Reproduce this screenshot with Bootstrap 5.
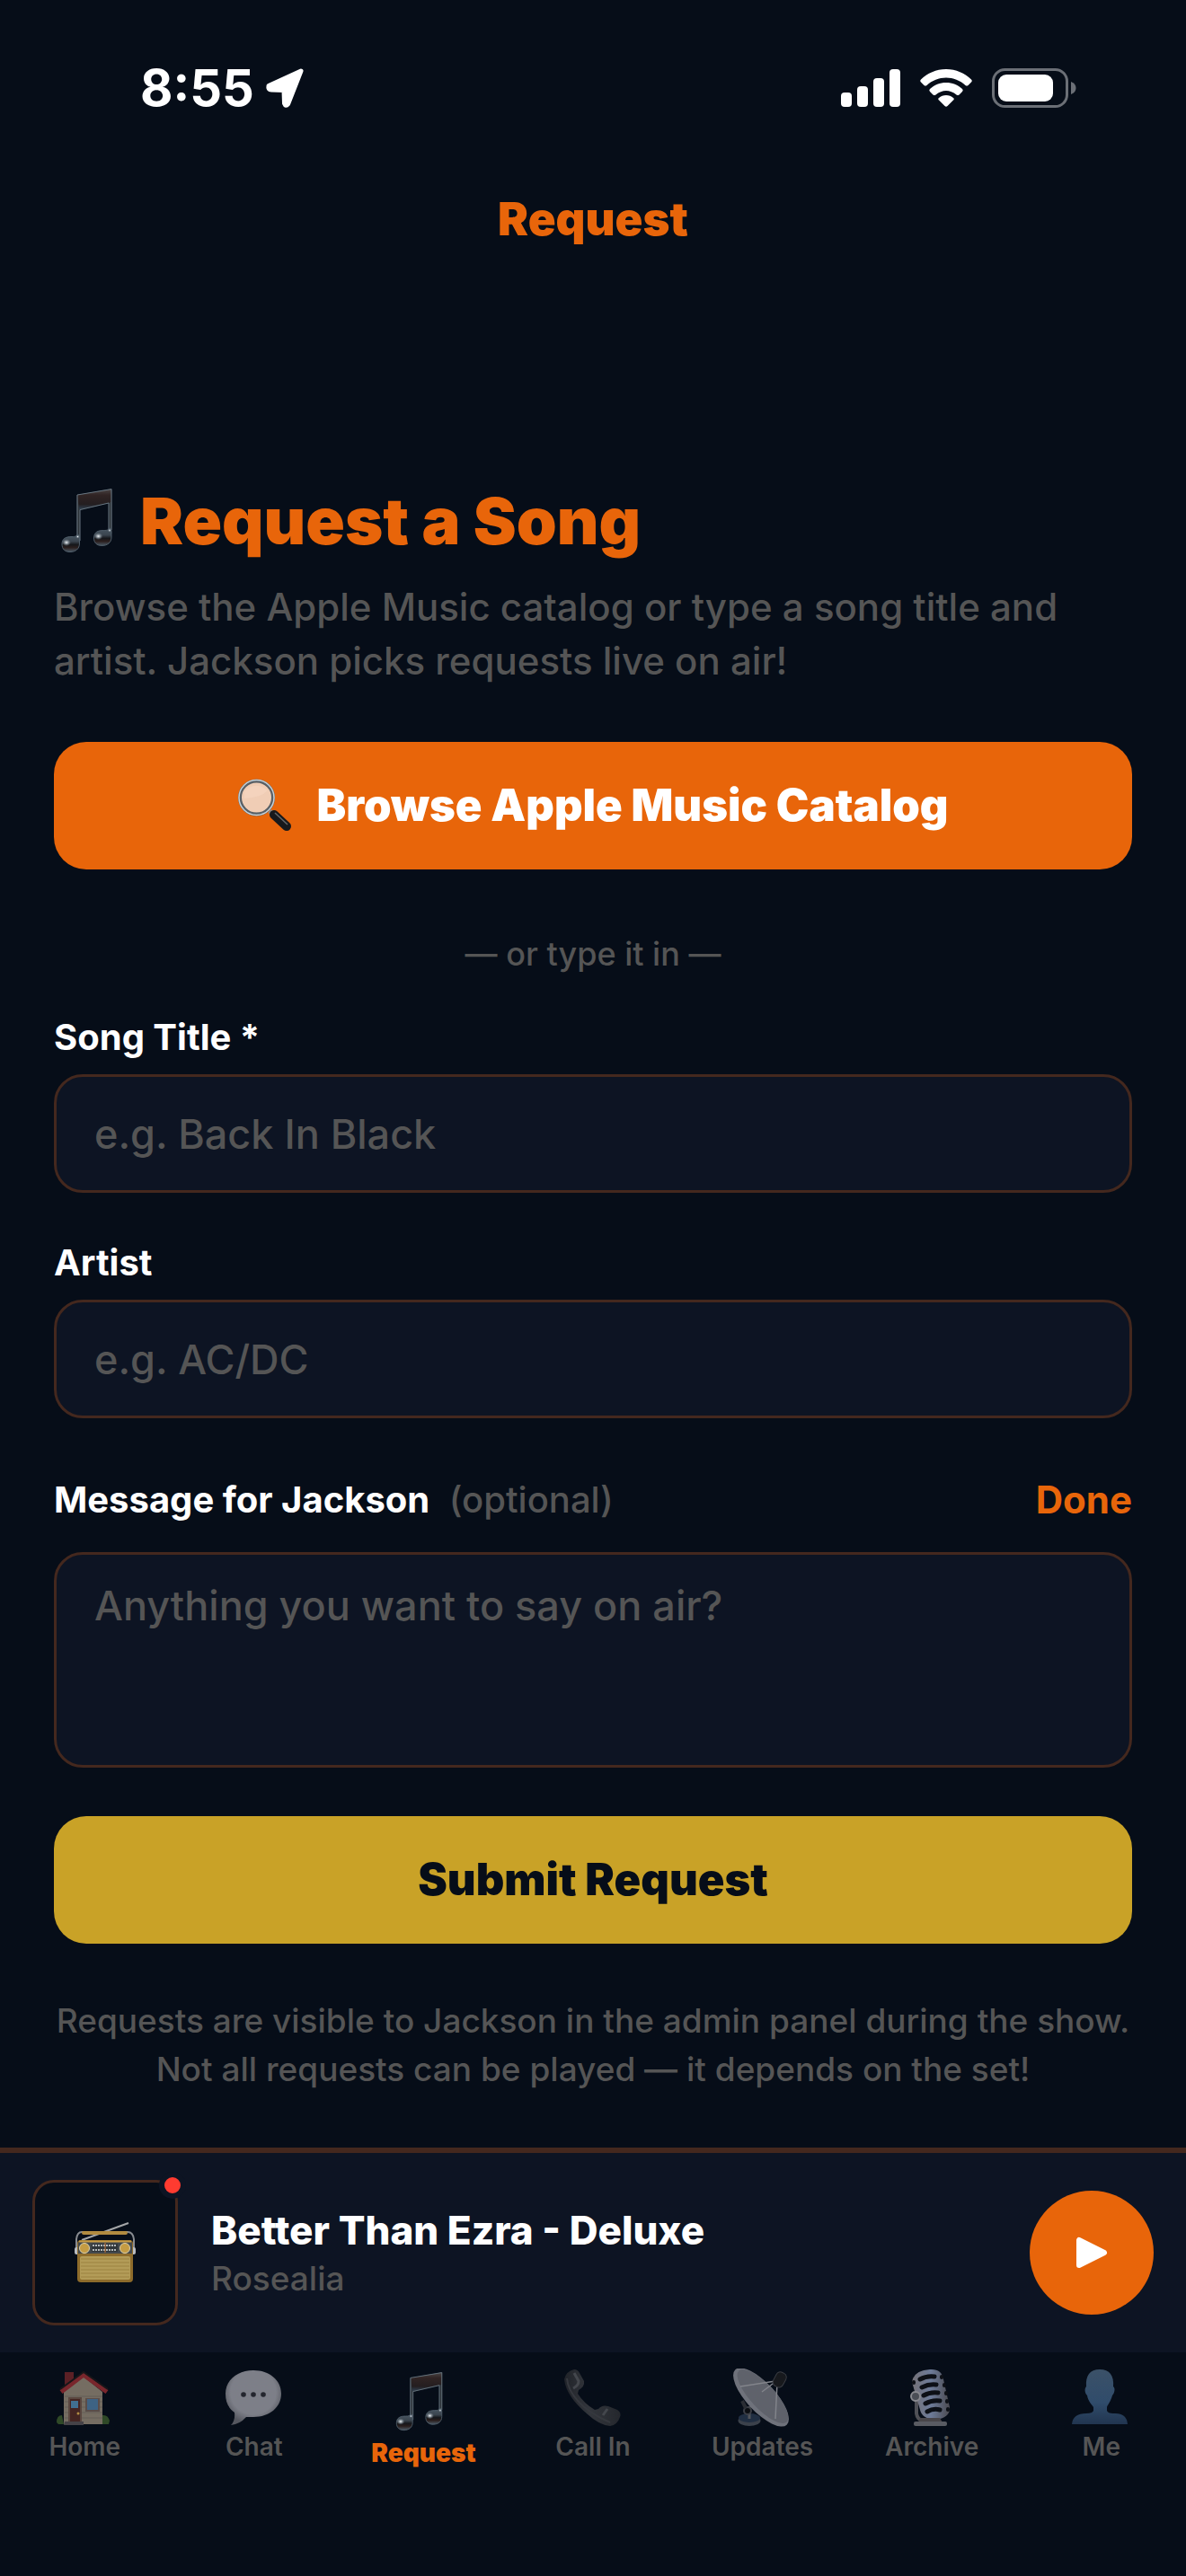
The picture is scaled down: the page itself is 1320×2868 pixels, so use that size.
<!DOCTYPE html>
<html lang="en">
<head>
<meta charset="utf-8">
<meta name="viewport" content="width=device-width, initial-scale=1">
<title>Request a Song</title>
<link rel="stylesheet" href="https://cdn.jsdelivr.net/npm/bootstrap@5.3.0/dist/css/bootstrap.min.css">
<style>
  :root { --night:#060d18; --panel:#0d1423; --edge:#44281e; --orange:#e8650a; --gold:#c9a227; --muted:#555; }
  body { background:var(--night); color:#fff; font-family:Inter,"Liberation Sans",sans-serif; font-size:36px; line-height:54px; }
  svg { display:block; flex:none; }
  .status-bar { padding:66px 122px 0 156px; height:130px; }
  .status-left { gap:12px; }
  .status-right { gap:22px; }
  .clock { font-size:56px; line-height:64px; font-weight:700; }
  .screen-title { padding-top:84px; font-size:51px; line-height:60px; font-weight:900; color:var(--orange); }
  .page-main { padding:264px 60px 60px; }
  .page-heading { font-size:72px; line-height:84px; font-weight:900; color:var(--orange); gap:30px; padding-left:8px; margin-bottom:24px; }
  .intro { font-size:42px; line-height:60px; color:var(--muted); font-weight:500; margin-bottom:60px; }
  .big-btn { height:142px; border:0; border-radius:36px; font-size:49px; line-height:60px; font-weight:900; --bs-btn-color:#fff; }
  .btn-browse, .btn-browse:hover { background:var(--orange); color:#fff; gap:28px; }
  .btn-submit, .btn-submit:hover { background:var(--gold); color:var(--night); }
  .divider-text { margin:72px 0 48px; line-height:44px; color:var(--muted); font-weight:500; }
  .field-label { font-size:40px; line-height:46px; font-weight:700; margin-bottom:18px; }
  .field, .field:focus { background:var(--panel); border:3px solid var(--edge); border-radius:32px; color:#fff; font-size:45px; line-height:54px; font-weight:500; padding:30px 42px; box-shadow:none; }
  .field::placeholder { color:var(--muted); opacity:1; }
  input.field { height:132px; }
  textarea.field { height:240px; resize:none; }
  .field-group { margin-bottom:55px; }
  .message-row { height:56px; margin:63px 0 30px; }
  .message-row .field-label { margin:0; }
  .optional { font-weight:500; color:var(--muted); margin-left:12px; }
  .btn-done, .btn-done:hover { color:var(--orange); font-size:42px; line-height:56px; font-weight:700; border:0; padding:0; }
  .btn-submit { margin-top:54px; }
  .note { color:var(--muted); font-size:37px; font-weight:500; margin:59px -6px 0; }
  .player { background:var(--panel); border-top:6px solid var(--edge); padding:30px 36px; gap:37px; }
  .cover { width:162px; height:162px; background:var(--night); border:3px solid var(--edge); border-radius:24px; }
  .live-dot { top:-12px; right:-12px; width:30px; height:30px; border-radius:50%; background:#ff3b30; border:6px solid var(--panel); }
  .track-info { padding-top:4px; }
  .track { font-size:44px; line-height:54px; font-weight:800; }
  .track-artist { font-size:37px; line-height:54px; color:var(--muted); font-weight:500; }
  .play-btn, .play-btn:hover { width:138px; height:138px; border:0; border-radius:50%; background:var(--orange); }
  .tabs { padding:18px 0 121px; }
  .tab-link { flex:1 1 0; min-width:0; font-size:28px; line-height:32px; font-weight:600; color:var(--muted); text-decoration:none; gap:5px; }
  .tab-link.active { color:var(--orange); font-weight:900; }
</style>
</head>
<body class="d-flex flex-column min-vh-100">
<svg width="0" height="0" class="position-absolute" aria-hidden="true">
  <defs>
    <linearGradient id="beam" x1="0" y1="0" x2="0" y2="1"><stop offset="0" stop-color="#4a4444"/><stop offset=".3" stop-color="#302424"/><stop offset=".75" stop-color="#241e20"/><stop offset="1" stop-color="#2f4152"/></linearGradient>
    <linearGradient id="ball" x1="0" y1="0" x2="0" y2="1"><stop offset="0" stop-color="#4a5864"/><stop offset=".4" stop-color="#3a444e"/><stop offset=".58" stop-color="#15171b"/><stop offset=".75" stop-color="#2a1e1d"/><stop offset="1" stop-color="#4a5966"/></linearGradient>
    <radialGradient id="shine"><stop offset="0" stop-color="#f4f6f8"/><stop offset=".4" stop-color="#a3adb5" stop-opacity=".8"/><stop offset="1" stop-color="#6c7780" stop-opacity="0"/></radialGradient>
    <symbol id="notes" viewBox="0 0 58 72">
      <path d="M17.500 7 56.500 0V50H53V16L21 24V58H17.500Z" fill="#2c3238"/>
      <path d="M18 7 56 .500V15L20 23Z" fill="url(#beam)"/>
      <path d="M18 54V7L56 .600V46M21 58V23.500L53 16V48" fill="none" stroke="#687681" stroke-width="1"/>
      <path d="M18 51Q20.500 51 20.500 56V61C20.500 67 16 70.500 10 70.500 4 70.500 1 67 1 62 1 55 6 53.500 12 53.500 16 53.500 17 53 18 51Z" fill="url(#ball)" stroke="#4f5d69"/>
      <path d="M53.500 44Q56 44 56 49V54C56 60 51.500 63.500 45.500 63.500 39.500 63.500 36.500 60 36.500 55 36.500 48 41.500 46.500 47.500 46.500 51.500 46.500 52.500 46 53.500 44Z" fill="url(#ball)" stroke="#4f5d69"/>
      <ellipse cx="6" cy="60" rx="5" ry="4" fill="url(#shine)"/><ellipse cx="41.500" cy="53" rx="5" ry="4" fill="url(#shine)"/>
      <circle cx="18.500" cy="53.500" r="2" fill="url(#shine)"/><circle cx="54" cy="46.500" r="2" fill="url(#shine)"/>
    </symbol>
  </defs>
</svg>

<header>
  <div class="status-bar d-flex align-items-center justify-content-between">
    <div class="status-left d-flex align-items-center">
      <span class="clock">8:55</span>
      <svg width="46" height="46" viewBox="0 0 46 46" aria-hidden="true"><path d="M40 4 4 20.500Q3 25 7 25L21 25.500 21.500 40Q23 44 25.500 41Z" fill="#fff" stroke="#fff" stroke-width="5" stroke-linejoin="round"/></svg>
    </div>
    <div class="status-right d-flex align-items-center" aria-hidden="true">
      <svg width="66" height="42" viewBox="0 0 66 42" fill="#fff"><rect y="26" width="12" height="16" rx="4"/><rect x="18" y="19" width="12" height="23" rx="4"/><rect x="36" y="10" width="12" height="32" rx="4"/><rect x="54" width="12" height="42" rx="4"/></svg>
      <svg width="58" height="42" viewBox="0 0 58 42" fill="#fff"><path d="M29 0C40 0 50 4.500 57 11.500Q58.500 13 57 14.500L53.500 18Q52 19 50.500 18C44.500 12.500 37 9.500 29 9.500S13.500 12.500 7.500 18Q6 19 4.500 18L1 14.500Q-.500 13 1 11.500C8 4.500 18 0 29 0Z"/><path d="M29 15C36 15 42 17.500 47 22Q48.500 23.500 47 25L43.500 28.500Q42 29.500 40.500 28.500C37 25.500 33 24 29 24S21 25.500 17.500 28.500Q16 29.500 14.500 28.500L11 25Q9.500 23.500 11 22C16 17.500 22 15 29 15Z"/><path d="M29 29C32 29 35 30 37 32Q38.500 33 37 34.500L30.500 41Q29 42.500 27.500 41L21 34.500Q19.500 33 21 32C23 30 26 29 29 29Z"/></svg>
      <svg width="94" height="44" viewBox="0 0 94 44"><rect x="1.500" y="1.500" width="82" height="41" rx="13" fill="none" stroke="#6b6f76" stroke-width="3"/><rect x="7" y="7" width="61" height="30" rx="9" fill="#fff"/><path d="M88 15Q93.500 17 93.500 22T88 29Z" fill="#6b6f76"/></svg>
    </div>
  </div>
  <div class="screen-title text-center">Request</div>
</header>

<main class="page-main flex-grow-1">
  <h1 class="page-heading d-flex align-items-center mt-0">
    <svg width="58" height="72" aria-hidden="true"><use href="#notes"/></svg>
    <span>Request a Song</span>
  </h1>
  <p class="intro">Browse the Apple Music catalog or type a song title and artist. Jackson picks requests live on air!</p>
  <form>
    <button type="button" class="btn big-btn btn-browse w-100 d-flex align-items-center justify-content-center">
      <svg width="60" height="60" viewBox="0 0 60 60" aria-hidden="true">
        <path d="m36 36 5 4" stroke="#8b8f92" stroke-width="5"/><path d="M41 40 55 53" stroke="#17191c" stroke-width="10" stroke-linecap="round"/><path d="m42 38 14 13" stroke="#64686b" stroke-width="1.500"/>
        <circle cx="21.500" cy="21" r="18.500" fill="#f0cdb5" stroke="#596066" stroke-width="4"/><circle cx="21.500" cy="21" r="19.500" fill="none" stroke="#c6d0d6" stroke-width="1.500"/><path d="M8 14Q20 2 34 13 27 21 8 22Z" fill="#f8dac5" opacity=".5"/>
      </svg>
      <span>Browse Apple Music Catalog</span>
    </button>
    <p class="divider-text text-center">— or type it in —</p>
    <div class="field-group">
      <label class="field-label d-block" for="song">Song Title *</label>
      <input class="form-control field" id="song" type="text" placeholder="e.g. Back In Black">
    </div>
    <div class="field-group">
      <label class="field-label d-block" for="artist">Artist</label>
      <input class="form-control field" id="artist" type="text" placeholder="e.g. AC/DC">
    </div>
    <div class="message-row d-flex align-items-center justify-content-between">
      <label class="field-label" for="message">Message for Jackson <span class="optional">(optional)</span></label>
      <button type="button" class="btn btn-done">Done</button>
    </div>
    <textarea class="form-control field" id="message" placeholder="Anything you want to say on air?"></textarea>
    <button type="submit" class="btn big-btn btn-submit d-block w-100">Submit Request</button>
  </form>
  <p class="note text-center">Requests are visible to Jackson in the admin panel during the show.<br>Not all requests can be played — it depends on the set!</p>
</main>

<footer>
  <section class="player d-flex align-items-center" aria-label="Now playing">
    <div class="cover position-relative d-flex align-items-center justify-content-center flex-shrink-0">
      <svg width="70" height="68" viewBox="-1 0 70 68" aria-hidden="true">
        <path d="M8 20 60 1" stroke="#a4a6a8" stroke-width="2"/><path d="M2 34V19Q3 11 8 11H59Q65 11 66 19V34" fill="none" stroke="#888b90" stroke-width="2"/><rect x="8" y="10" width="51" height="4" rx="2" fill="#b28b40"/>
        <rect y="28" width="5" height="8" rx="2" fill="#b9bcc0"/><rect x="63" y="28" width="5" height="8" rx="2" fill="#b9bcc0"/>
        <rect x="3" y="20" width="62" height="47" rx="4" fill="#8d6b2b"/><path d="M4 24Q4 21 8 21H60Q64 21 64 24V35H4Z" fill="#42484c"/><path d="M5 21.500H63" stroke="#c89c45" stroke-width="2"/>
        <circle cx="11" cy="29" r="5.500" fill="#c59c43" stroke="#ddd1ac"/><circle cx="56" cy="29" r="5.500" fill="#c59c43" stroke="#ddd1ac"/>
        <rect x="19" y="24" width="29" height="9" fill="#30363a"/><path d="M20 26H47M20 31H47" stroke="#b6babb" stroke-width="2" stroke-dasharray="2 1"/><path d="M34 23V34" stroke="#c8783b"/>
        <rect x="6" y="38" width="56" height="26" rx="2" fill="#b39c58"/><path d="M7 41H61M7 45H61M7 49H61M7 53H61M7 57H61M7 61H61" stroke="#9c8240" stroke-width="1"/>
      </svg>
      <span class="live-dot position-absolute"></span>
    </div>
    <div class="track-info flex-grow-1">
      <div class="track">Better Than Ezra - Deluxe</div>
      <div class="track-artist">Rosealia</div>
    </div>
    <button type="button" class="btn play-btn p-0 d-flex align-items-center justify-content-center" aria-label="Play">
      <svg width="36" height="36" viewBox="0 0 36 36"><path d="M4 4V32L32 18Z" fill="#fff" stroke="#fff" stroke-width="6" stroke-linejoin="round"/></svg>
    </button>
  </section>

  <nav class="tabs d-flex align-items-start" aria-label="Main">
    <a class="tab-link d-flex flex-column align-items-center" href="#home">
      <svg width="66" height="66" viewBox="0 0 66 66" aria-hidden="true"><path d="M11 4H21V22L11 26Z" fill="#5b2025"/><path d="M10 26 32 9 53 26V62H10Z" fill="#756d62"/><path d="M11 31H53M11 37H53M11 43H53M11 49H53M11 55H53" stroke="#655f57"/><path d="M7 26 32 7 58 26" fill="none" stroke="#79262c" stroke-width="5"/><path d="M6 23 32 4 59 23" fill="none" stroke="#181619" stroke-width="2"/><rect x="15" y="32" width="15" height="29" fill="#5a4740"/><rect x="17" y="34" width="11" height="26" fill="#442522"/><rect x="18" y="36" width="8" height="8" fill="#417091"/><circle cx="26" cy="50" r="1.500" fill="#b28c42"/><rect x="34" y="33" width="16" height="15" fill="#5a4d49"/><rect x="36" y="34" width="12" height="12" fill="#3e6384"/><path d="M2 60Q2 52 8 52L10 62H4ZM53 62V52Q59 51 61 58L60 62Z" fill="#2f4927"/><path d="M11 59H32V63H10Z" fill="#454247"/></svg>
      <span>Home</span>
    </a>
    <a class="tab-link d-flex flex-column align-items-center" href="#chat">
      <svg width="66" height="66" viewBox="0 0 66 66" aria-hidden="true"><defs><radialGradient id="bub" cx=".5" cy=".4" r=".58"><stop offset=".7" stop-color="#7d7f88"/><stop offset="1" stop-color="#55575f"/></radialGradient></defs><path d="M32 2C50 2 63 13 63 28S50 54 32 54Q28 54 24 54 17 62 7 63 12 58 11 49C4 44 1 37 1 28 1 13 14 2 32 2Z" fill="url(#bub)"/><g fill="#24262e"><circle cx="21" cy="29" r="2.800"/><circle cx="32" cy="29" r="2.800"/><circle cx="43" cy="29" r="2.800"/></g></svg>
      <span>Chat</span>
    </a>
    <a class="tab-link active d-flex flex-column align-items-center" href="#request" aria-current="page">
      <svg width="66" height="73" viewBox="0 0 66 73" aria-hidden="true"><use href="#notes" x="2" y="4" width="54" height="66"/></svg>
      <span>Request</span>
    </a>
    <a class="tab-link d-flex flex-column align-items-center" href="#call">
      <svg width="66" height="66" viewBox="0 0 66 66" aria-hidden="true"><defs><linearGradient id="tel"><stop stop-color="#202329"/><stop offset=".45" stop-color="#33363c"/><stop offset="1" stop-color="#24272d"/></linearGradient></defs><path d="M1 12Q3 3 12 1 16 1 18 5L23 14Q24 20 17 24L16 28Q23 39 35 46L39 45Q43 40 50 42L60 46Q65 49 63 54 60 63 52 64 40 63 27 51 3 31 1 12Z" fill="url(#tel)"/><path d="M4 11Q5 24 17 37T52 60" fill="none" stroke="#35383e" stroke-width="2"/><path d="M12 5 17 14Q17 19 11 22M49 45 44 52" fill="none" stroke="#44474d" stroke-width="3"/></svg>
      <span>Call In</span>
    </a>
    <a class="tab-link d-flex flex-column align-items-center" href="#updates">
      <svg width="66" height="66" viewBox="0 0 66 66" aria-hidden="true"><ellipse cx="18" cy="58" rx="12.500" ry="6" fill="#3b414b"/><ellipse cx="18" cy="55" rx="12" ry="5" fill="#202e42"/><path d="M18 56V42" stroke="#51545a" stroke-width="3"/><circle cx="16" cy="47" r="4" fill="#0b0d12" stroke="#3b3e45" stroke-width="2"/><path d="M10 36 14 44" stroke="#2a2d33" stroke-width="4"/><ellipse cx="31" cy="32" rx="42" ry="16" transform="rotate(47 31 32)" fill="#6f727b"/><ellipse cx="33" cy="31" rx="39" ry="13.500" transform="rotate(47 33 31)" fill="#5f626b"/><path d="M8 20 47 14M49 16 47 56M48 14 32 26" fill="none" stroke="#82848b" stroke-width="1.500"/><rect x="46" y="4" width="12" height="17" rx="5" transform="rotate(28 52 12)" fill="#17191d" stroke="#393c42"/></svg>
      <span>Updates</span>
    </a>
    <a class="tab-link d-flex flex-column align-items-center" href="#archive">
      <svg width="66" height="66" viewBox="0 0 66 66" aria-hidden="true"><defs><linearGradient id="mic"><stop stop-color="#747177"/><stop offset=".5" stop-color="#6d7b98"/><stop offset="1" stop-color="#4b4a50"/></linearGradient></defs><path d="M16 30V50Q17 57 23 58" fill="none" stroke="#4f5056" stroke-width="4"/><path d="M11 15Q13 2 31 1 44 0 46 12L53 43Q54 55 37 57 22 56 20 46Z" fill="url(#mic)"/><g fill="none" stroke="#0d1016" stroke-width="5" stroke-linecap="round"><path d="M20 12Q27 8 36 9M22 21Q30 17 38 18M24 30Q31 26 40 27M26 39Q33 35 42 36M28 48Q35 44 42 46"/><path d="M44 9V10M47 18V19M49 27V28M50 36V37M51 45V46M13 15V16" stroke-width="4"/></g><circle cx="15" cy="31" r="5" fill="#4a4e56" stroke="#898a90" stroke-width="2"/><path d="M20 55H42L45 60H18Z" fill="#484549"/><rect x="13" y="59" width="37" height="5" rx="2" fill="#595b62"/></svg>
      <span>Archive</span>
    </a>
    <a class="tab-link d-flex flex-column align-items-center" href="#me">
      <svg width="66" height="66" viewBox="0 0 66 66" aria-hidden="true"><defs><linearGradient id="me" x1="0" y1="0" x2="0" y2="1"><stop stop-color="#3b5168"/><stop offset=".6" stop-color="#304c6b"/><stop offset="1" stop-color="#213550"/></linearGradient></defs><path d="M31 1C42 1 47 8 46 20 49 22 47 28 45 30 43 37 40 40 39 43V47Q40 50 46 50 61 49 62 62H0Q1 50 16 50 23 50 24 47V43C22 40 18 36 17 30 14 27 14 22 16 20 15 8 20 1 31 1Z" fill="url(#me)"/></svg>
      <span>Me</span>
    </a>
  </nav>
</footer>
<script src="https://cdn.jsdelivr.net/npm/bootstrap@5.3.0/dist/js/bootstrap.bundle.min.js"></script>
</body>
</html>
